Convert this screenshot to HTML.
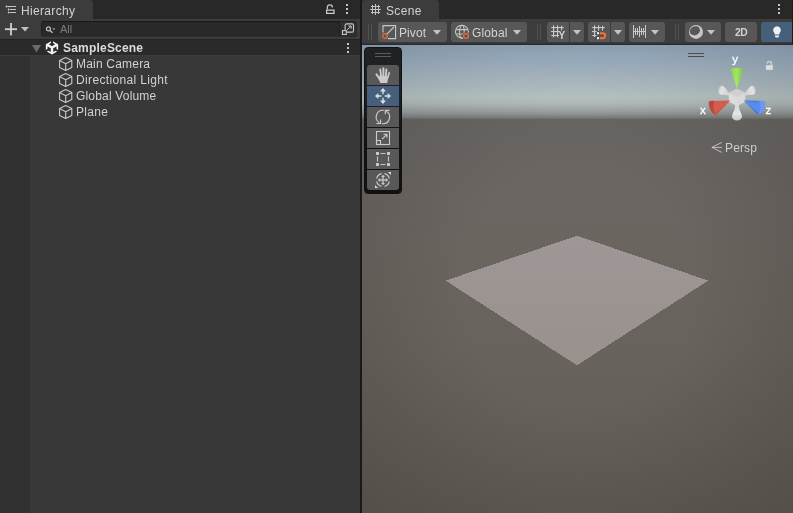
<!DOCTYPE html>
<html>
<head>
<meta charset="utf-8">
<title>Unity Editor</title>
<style>
html,body{margin:0;padding:0;background:#383838;}
body{width:793px;height:513px;overflow:hidden;position:relative;font-family:"Liberation Sans",sans-serif;font-size:12px;color:#d2d2d2;}
.abs{position:absolute;}
.t{position:absolute;white-space:nowrap;line-height:16px;height:16px;will-change:transform;}
svg{position:absolute;overflow:visible;}
.btn{position:absolute;background:#575757;top:22px;height:20px;}
</style>
</head>
<body>
<!-- ================= LEFT: HIERARCHY ================= -->
<div class="abs" id="lp" style="left:0;top:0;width:360px;height:513px;background:#383838;"></div>
<div class="abs" style="left:0;top:0;width:360px;height:19px;background:#282828;"></div>
<div class="abs" style="left:0;top:0;width:93px;height:20px;background:#3c3c3c;border-radius:0 3px 0 0;"></div>
<div class="abs" style="left:0;top:19px;width:360px;height:20px;background:#3c3c3c;"></div>
<div class="abs" style="left:0;top:39px;width:360px;height:1px;background:#232323;"></div>
<!-- tab icon -->
<svg style="left:5px;top:5px" width="12" height="9" viewBox="0 0 12 9">
 <g fill="#c6c6c6"><rect x="2.2" y="1" width="8.8" height="1"/><rect x="4.4" y="4" width="6.6" height="1"/><rect x="4.4" y="7" width="6.6" height="1"/>
 <rect x="0.6" y="1" width="1.8" height="1"/><rect x="1" y="0.5" width="1" height="2"/>
 <rect x="2.8" y="4" width="1.4" height="1"/><rect x="3" y="3.6" width="1" height="1.8"/><rect x="2.8" y="7" width="1.4" height="1"/><rect x="3" y="6.6" width="1" height="1.8"/>
 <rect x="3.2" y="2" width="0.6" height="5" opacity="0.35"/></g>
</svg>
<div class="t" id="t_hier" style="left:20.6px;top:3px;letter-spacing:0.33px;">Hierarchy</div>
<!-- lock + kebab -->
<svg style="left:326px;top:4px" width="9" height="10" viewBox="0 0 9 10">
 <rect x="0.6" y="6.1" width="7.4" height="3.3" fill="none" stroke="#cacaca" stroke-width="1.25"/>
 <path d="M1.3 5.6 V3.5 A2.55 2.55 0 0 1 6.4 3.5" fill="none" stroke="#c6c6c6" stroke-width="1.2"/>
</svg>
<svg style="left:346px;top:4px" width="2" height="10"><g fill="#c4c4c4"><rect x="0" y="0" width="2" height="2"/><rect x="0" y="4" width="2" height="2"/><rect x="0" y="8" width="2" height="2"/></g></svg>
<!-- toolbar: plus, dropdown, search -->
<svg style="left:5px;top:23px" width="26" height="13" viewBox="0 0 26 13">
 <rect x="0" y="5.3" width="12" height="1.8" fill="#d0d0d0"/><rect x="5.1" y="0" width="1.8" height="12.4" fill="#d0d0d0"/>
 <path d="M16 4 L24 4 L20 8.6 Z" fill="#c0c0c0"/>
</svg>
<div class="abs" style="left:41px;top:21px;width:299px;height:16px;box-sizing:border-box;background:#292929;border:1px solid #1f1f1f;border-top-color:#181818;border-bottom-color:#2c2c2c;border-radius:3px 0 0 3px;"></div>
<div class="abs" style="left:340px;top:21px;width:17px;height:16px;box-sizing:border-box;background:#303030;border:1px solid #2a2a2a;border-top-color:#232323;border-left:none;border-radius:0 3px 3px 0;"></div>
<svg style="left:45px;top:24px" width="12" height="10" viewBox="0 0 12 10">
 <circle cx="3.45" cy="4.95" r="2" fill="none" stroke="#c4c4c4" stroke-width="1.2"/>
 <path d="M4.9 6.4 L7.5 8.7" stroke="#c4c4c4" stroke-width="1.3"/>
 <path d="M7.4 4.4 L10.3 4.4 L8.85 6.1 Z" fill="#c4c4c4"/>
</svg>
<div class="t" id="t_all" style="left:60.2px;top:21px;font-size:11px;color:#7b7b7b;">All</div>
<svg style="left:342px;top:23px" width="12" height="12" viewBox="0 0 12 12">
 <rect x="3.1" y="0.9" width="8.4" height="8.2" rx="1.4" fill="none" stroke="#c6c6c6" stroke-width="1.1"/>
 <rect x="0.5" y="7.6" width="3.8" height="3.8" fill="#303030" stroke="#c6c6c6" stroke-width="1.1"/>
 <path d="M5.2 6.8 L9 3.2 M6.4 3 H9.2 V5.8" fill="none" stroke="#c6c6c6" stroke-width="1"/>
</svg>
<!-- scene header row -->
<div class="abs" style="left:0;top:40px;width:360px;height:15px;background:#2a2a2a;"></div>
<div class="abs" style="left:0;top:55px;width:360px;height:1px;background:#3d3d3d;"></div>
<div class="abs" style="left:0;top:56px;width:30px;height:457px;background:#313131;"></div>
<svg style="left:32px;top:45px" width="9" height="8" viewBox="0 0 9 8"><path d="M0 0 H9 L4.5 7.6 Z" fill="#6b6b6b"/></svg>
<!-- unity logo -->
<svg style="left:46px;top:41px" width="12" height="14" viewBox="0 0 12 14">
 <polygon points="6.00,-0.25 12.17,3.17 12.17,10.02 6.00,13.45 -0.17,10.03 -0.17,3.17" fill="#f4f4f4"/>
 <g fill="#2b2b2b"><path d="M5.0 -0.6 H7.0 V2.0 L9.2 3.3 L6 5.2 L2.8 3.3 L5.0 2.0 Z"/><path d="M5.0 -0.6 H7.0 V2.0 L9.2 3.3 L6 5.2 L2.8 3.3 L5.0 2.0 Z" transform="rotate(120 6.00 6.60)"/><path d="M5.0 -0.6 H7.0 V2.0 L9.2 3.3 L6 5.2 L2.8 3.3 L5.0 2.0 Z" transform="rotate(240 6.00 6.60)"/></g>
</svg>
<div class="t" id="t_ss" style="left:63px;top:40px;letter-spacing:0.2px;font-weight:bold;color:#dcdcdc;">SampleScene</div>
<svg style="left:346.7px;top:43px" width="2" height="10"><g fill="#c4c4c4"><rect x="0" y="0" width="2" height="2"/><rect x="0" y="4" width="2" height="2"/><rect x="0" y="8" width="2" height="2"/></g></svg>
<!-- items -->
<svg width="0" height="0" style="position:absolute"><defs>
 <g id="cube"><path d="M6.7 0.6 L12.8 3.6 V10.4 L6.7 13.4 L0.6 10.4 V3.6 Z M0.6 3.6 L6.7 6.7 L12.8 3.6 M6.7 6.7 V13.4" fill="none" stroke="#c8c8c8" stroke-width="1.1" stroke-linejoin="round"/></g>
</defs></svg>
<svg style="left:59px;top:57px" width="14" height="14"><use href="#cube"/></svg>
<svg style="left:59px;top:73px" width="14" height="14"><use href="#cube"/></svg>
<svg style="left:59px;top:89px" width="14" height="14"><use href="#cube"/></svg>
<svg style="left:59px;top:105px" width="14" height="14"><use href="#cube"/></svg>
<div class="t" id="t_i1" style="left:76px;top:56px;letter-spacing:0.2px;">Main Camera</div>
<div class="t" id="t_i2" style="left:76px;top:72px;letter-spacing:0.35px;">Directional Light</div>
<div class="t" id="t_i3" style="left:75.6px;top:88px;letter-spacing:0.18px;">Global Volume</div>
<div class="t" id="t_i4" style="left:76px;top:104px;letter-spacing:0.3px;">Plane</div>

<!-- ================= DIVIDER ================= -->
<div class="abs" style="left:360px;top:0;width:2px;height:513px;background:#191919;"></div>

<!-- ================= RIGHT: SCENE ================= -->
<div class="abs" style="left:362px;top:0;width:431px;height:20px;background:#282828;"></div>
<div class="abs" style="left:362px;top:0;width:77px;height:20px;background:#3c3c3c;border-radius:3px 3px 0 0;"></div>
<div class="abs" style="left:362px;top:19px;width:431px;height:25px;background:#3c3c3c;"></div>
<div class="abs" style="left:362px;top:43px;width:431px;height:1px;background:#343434;"></div><div class="abs" style="left:362px;top:44px;width:431px;height:1px;background:#2b2b2b;"></div>
<div class="t" id="t_scene" style="left:386px;top:3px;letter-spacing:0.35px;">Scene</div>
<svg style="left:370px;top:4px" width="11" height="11" viewBox="0 0 11 11"><g fill="#c2c2c2"><rect x="2" y="1" width="1" height="9"/><rect x="5" y="0" width="1" height="11"/><rect x="8" y="1" width="1" height="9"/><rect x="1" y="2" width="9" height="1"/><rect x="0" y="5" width="11" height="1"/><rect x="1" y="8" width="9" height="1"/></g></svg>
<svg style="left:778px;top:4px" width="2" height="10"><g fill="#c4c4c4"><rect x="0" y="0" width="2" height="2"/><rect x="0" y="4" width="2" height="2"/><rect x="0" y="8" width="2" height="2"/></g></svg>

<!-- scene toolbar -->
<div class="abs" style="left:368px;top:24px;width:1px;height:16px;background:#505050;"></div><div class="abs" style="left:371px;top:24px;width:1px;height:16px;background:#505050;"></div>
<div class="btn" style="left:378px;width:69px;border-radius:3px;"></div>
<svg style="left:382px;top:25px" width="15" height="15" viewBox="0 0 15 15"><path d="M1 7.6 V0.6 H13.6 V13.6 H6" fill="none" stroke="#c8c8c8" stroke-width="1.1"/><path d="M4.6 9.4 L12 2" stroke="#c8c8c8" stroke-width="1.1"/><circle cx="3" cy="11" r="2.3" fill="none" stroke="#f06a3a" stroke-width="1.2"/></svg>
<div class="t" id="t_pivot" style="left:398.7px;top:24.5px;letter-spacing:0.1px;">Pivot</div>
<svg style="left:433px;top:30px" width="8" height="5"><path d="M0 0 H8 L4 4.8 Z" fill="#c4c4c4"/></svg>
<div class="btn" style="left:451px;width:76px;border-radius:3px;"></div>
<svg style="left:455px;top:25px" width="16" height="15" viewBox="0 0 16 15"><g fill="none" stroke="#c8c8c8" stroke-width="1.05"><circle cx="6.9" cy="6.7" r="6.4"/><ellipse cx="6.9" cy="6.7" rx="2.3" ry="6.4"/><path d="M1.3 4.6 H12.5 M1.3 8.9 H12.5"/></g><circle cx="11.05" cy="11" r="3.7" fill="#575757"/><circle cx="11.05" cy="11" r="2.4" fill="none" stroke="#f06a3a" stroke-width="1.3"/></svg>
<div class="t" id="t_global" style="left:471.7px;top:24.5px;letter-spacing:0.15px;">Global</div>
<svg style="left:513px;top:30px" width="8" height="5"><path d="M0 0 H8 L4 4.8 Z" fill="#c4c4c4"/></svg>

<div class="abs" style="left:537px;top:24px;width:1px;height:16px;background:#505050;"></div><div class="abs" style="left:540px;top:24px;width:1px;height:16px;background:#505050;"></div>
<div class="btn" style="left:547px;width:22px;border-radius:3px 0 0 3px;"></div>
<div class="btn" style="left:570px;width:14px;border-radius:0 3px 3px 0;"></div>
<svg style="left:551px;top:25px;will-change:transform" width="15" height="15" viewBox="0 0 15 15"><g fill="#cacaca"><rect x="2" y="0.3" width="1.1" height="12"/><rect x="6" y="0.3" width="1.1" height="12"/><rect x="10" y="0.8" width="1.1" height="4.6"/><rect x="0.3" y="2" width="12.4" height="1.1"/><rect x="0" y="6" width="8.6" height="1.1"/><rect x="0.3" y="10" width="7.6" height="1.1"/></g>
 <text x="7.6" y="13.7" font-family="Liberation Sans, sans-serif" font-weight="bold" font-size="10" fill="#d4d4d4">Y</text></svg>
<svg style="left:573px;top:30px" width="8" height="5"><path d="M0 0 H8 L4 4.8 Z" fill="#c4c4c4"/></svg>

<div class="btn" style="left:588px;width:22px;border-radius:3px 0 0 3px;"></div>
<div class="btn" style="left:611px;width:14px;border-radius:0 3px 3px 0;"></div>
<svg style="left:592px;top:25px" width="15" height="15" viewBox="0 0 15 15"><g fill="#cacaca"><rect x="2" y="0.3" width="1.1" height="11.7"/><rect x="6" y="0.3" width="1.1" height="5.3"/><rect x="10" y="0.8" width="1.1" height="4.8"/><rect x="0.3" y="2" width="12.4" height="1.1"/><rect x="0" y="6" width="4.6" height="1.1"/><rect x="0.3" y="10" width="4.2" height="1.1"/></g>
 <rect x="4.5" y="6.7" width="3.1" height="3" fill="#3c3c3c" opacity="0.6"/><rect x="4.5" y="11.7" width="3.1" height="3" fill="#3c3c3c" opacity="0.6"/>
 <rect x="5" y="7.2" width="2.1" height="2" fill="#fafafa"/><rect x="5" y="12.2" width="2.1" height="2" fill="#fafafa"/>
 <path d="M8 8.2 H10.8 A2.5 2.5 0 0 1 10.8 13.2 H8" fill="none" stroke="#ff6f35" stroke-width="2"/></svg>
<svg style="left:614px;top:30px" width="8" height="5"><path d="M0 0 H8 L4 4.8 Z" fill="#c4c4c4"/></svg>

<div class="btn" style="left:629px;width:36px;border-radius:3px;"></div>
<svg style="left:632px;top:25px" width="15" height="14" viewBox="0 0 15 14"><g fill="#cacaca"><rect x="1" y="0" width="1" height="13"/><rect x="13" y="0" width="1" height="13"/><rect x="1" y="6" width="13" height="1"/><rect x="3" y="3" width="1" height="7"/><rect x="5" y="3" width="1" height="7"/><rect x="7" y="1" width="1" height="11"/><rect x="9" y="3" width="1" height="7"/><rect x="11" y="3" width="1" height="7"/></g></svg>
<svg style="left:651px;top:30px" width="8" height="5"><path d="M0 0 H8 L4 4.8 Z" fill="#c4c4c4"/></svg>

<div class="abs" style="left:675px;top:24px;width:1px;height:16px;background:#505050;"></div><div class="abs" style="left:678px;top:24px;width:1px;height:16px;background:#505050;"></div>
<div class="btn" style="left:685px;width:36px;border-radius:3px;"></div>
<svg style="left:689px;top:25px" width="14" height="14" viewBox="0 0 14 14"><circle cx="7" cy="6.9" r="7" fill="#c6c6c6"/><ellipse cx="5.9" cy="5.7" rx="5.2" ry="4.4" transform="rotate(-25 5.9 5.7)" fill="#575757"/></svg>
<svg style="left:707px;top:30px" width="8" height="5"><path d="M0 0 H8 L4 4.8 Z" fill="#c4c4c4"/></svg>

<div class="btn" style="left:725px;width:32px;border-radius:3px;"></div>
<div class="t" id="t_2d" style="left:734.8px;top:24.5px;font-weight:bold;font-size:10.3px;letter-spacing:-0.5px;">2D</div>
<div class="btn" style="left:761px;width:31px;border-radius:3px 0 0 3px;background:#46607c;"></div>
<svg style="left:772px;top:26px" width="10" height="12" viewBox="0 0 10 12"><path d="M5 0.2 A4.2 4.2 0 0 1 7.4 7.6 V8.6 H2.6 V7.6 A4.2 4.2 0 0 1 5 0.2 Z" fill="#f0f0f0"/><path d="M3 9.6 H7 V10.4 L6 11.6 H4 L3 10.4 Z" fill="#f0f0f0"/></svg>
<div class="abs" style="left:792px;top:0;width:1px;height:513px;background:#1c1c1c;"></div>
<!-- scene view -->
<div class="abs" id="sv" style="left:362px;top:45px;width:431px;height:468px;overflow:hidden;
 background:linear-gradient(to bottom,#98adc3 0px,#a5b8c8 20px,#b4c2c8 40px,#bdc9c8 52px,#b7c1c0 58px,#b0b8b8 61px,#9ca1a1 67px,#888b8b 71px,#7c7d7d 73px,#6b6765 74.5px,#6a6664 80px,#6b6661 150px,#68635c 300px,#615c55 468px);">

 <!-- vignette -->
 <div class="abs" style="left:0;top:0;width:431px;height:468px;background:radial-gradient(ellipse 75% 75% at 50% 52%,rgba(0,0,0,0) 35%,rgba(0,0,0,0.17) 100%);"></div>
 <!-- plane -->
 <svg style="left:0;top:0" width="431" height="468" viewBox="362 45 431 468" shape-rendering="crispEdges">
  <defs><linearGradient id="pg" x1="0" y1="0" x2="0" y2="1"><stop offset="0" stop-color="#9e9795"/><stop offset="1" stop-color="#98918e"/></linearGradient></defs>
  <path d="M577 235.7 L708.3 280.6 L577 365.3 L445.6 280.6 Z" fill="url(#pg)"/>
 </svg>

 <!-- tool palette overlay (coords relative to scene view: page x-362, y-45) -->
 <div class="abs" style="left:2px;top:2px;width:38px;height:147px;box-sizing:border-box;background:linear-gradient(to bottom,#1f2326 0px,#1d2023 50px,#151617 76px,#111111 100px);border:1px solid #111213;border-radius:4px;"></div>
 <div class="abs" style="left:13px;top:8px;width:16px;height:1px;background:#5c5c5c;"></div>
 <div class="abs" style="left:13px;top:11px;width:16px;height:1px;background:#5c5c5c;"></div>
 <div class="abs" style="left:5px;top:20px;width:32px;height:20px;background:#585858;border-radius:3px 3px 0 0;"></div>
 <div class="abs" style="left:5px;top:41px;width:32px;height:20px;background:#46607c;"></div>
 <div class="abs" style="left:5px;top:62px;width:32px;height:20px;background:#585858;"></div>
 <div class="abs" style="left:5px;top:83px;width:32px;height:20px;background:#585858;"></div>
 <div class="abs" style="left:5px;top:104px;width:32px;height:20px;background:#585858;"></div>
 <div class="abs" style="left:5px;top:125px;width:32px;height:20px;background:#585858;border-radius:0 0 3px 3px;"></div>
 <!-- hand -->
 <svg style="left:13px;top:22px" width="16" height="17" viewBox="0 0 16 17">
  <g stroke="#cbcbcb" stroke-linecap="round" fill="none">
   <path d="M5.3 2.5 L6.2 10" stroke-width="1.9"/><path d="M8.4 1.3 L8.4 10" stroke-width="1.9"/><path d="M11.4 2.5 L10.7 10" stroke-width="1.9"/><path d="M14.2 5.7 L12.6 11" stroke-width="1.7"/><path d="M1.5 7.4 L5 12.4" stroke-width="2"/>
  </g>
  <path d="M4.6 8.6 L13.4 9.4 L12.2 16 L5.4 16 L3.4 11.6 Z" fill="#cbcbcb"/>
 </svg>
 <!-- move -->
 <svg style="left:13px;top:43px" width="16" height="16" viewBox="0 0 16 16">
  <g stroke="#d8dfe8" stroke-width="1.4" fill="none"><path d="M8 2 V6.3 M8 9.7 V14 M2 8 H6.3 M9.7 8 H14"/></g>
  <g fill="#d8dfe8"><path d="M8 0 L11 3.4 H5 Z"/><path d="M8 16 L11 12.6 H5 Z"/><path d="M0 8 L3.4 5 V11 Z"/><path d="M16 8 L12.6 5 V11 Z"/></g>
 </svg>
 <!-- rotate -->
 <svg style="left:13px;top:64px" width="16" height="16" viewBox="0 0 16 16">
  <g stroke="#cbcbcb" stroke-width="1.15" fill="none">
   <path d="M8.8 1.35 A6.7 6.7 0 0 0 4.4 13.7"/>
   <path d="M7 14.65 A6.7 6.7 0 0 0 11.4 2.3"/>
   <path d="M1.3 14.5 H5.6 V10.6"/><path d="M14.6 1.4 H10.3 V5.3"/>
  </g>
 </svg>
 <!-- scale -->
 <svg style="left:13px;top:85px" width="16" height="16" viewBox="0 0 16 16">
  <g stroke="#cbcbcb" stroke-width="1.1" fill="none">
   <rect x="1.5" y="1.5" width="13" height="13"/>
   <rect x="1.5" y="10.5" width="4" height="4"/>
   <path d="M7.2 9 L11.8 4.4 M8.4 4.3 H11.9 V7.8"/>
  </g>
 </svg>
 <!-- rect -->
 <svg style="left:13px;top:106px" width="16" height="16" viewBox="0 0 16 16">
  <g fill="#c8c8c8"><rect x="1" y="1" width="3" height="3"/><rect x="12" y="1" width="3" height="3"/><rect x="1" y="12" width="3" height="3"/><rect x="12" y="12" width="3" height="3"/></g>
  <g stroke="#c8c8c8" stroke-width="1.1"><path d="M5.5 2.5 H10.5 M5.5 13.5 H10.5 M2.5 5.5 V10.5 M13.5 5.5 V10.5"/></g>
 </svg>
 <!-- transform -->
 <svg style="left:13px;top:127px" width="16" height="16" viewBox="0 0 16 16">
  <g stroke="#cbcbcb" stroke-width="1.15" fill="none"><path d="M14.36 9.30 A6.5 6.5 0 0 1 9.35 14.31"/><path d="M6.65 14.31 A6.5 6.5 0 0 1 1.64 9.30"/><path d="M1.64 6.60 A6.5 6.5 0 0 1 6.65 1.59"/><path d="M9.35 1.59 A6.5 6.5 0 0 1 14.36 6.60"/></g>
  <g stroke="#bdbdbd" stroke-width="1.5" fill="none"><path d="M8 4.4 V11.5 M4.4 7.95 H11.6"/></g>
  <g fill="#c4c4c4"><path d="M8 2.7 L10 5 H6 Z"/><path d="M8 13.2 L10 10.9 H6 Z"/><path d="M2.8 7.95 L5.1 5.95 V9.95 Z"/><path d="M13.2 7.95 L10.9 5.95 V9.95 Z"/>
   <path d="M12.9 0 H16 V3.1 Z" fill="#dcdcdc"/><path d="M3.1 16 H0 V12.9 Z" fill="#dcdcdc"/></g>
 </svg>

 <!-- gizmo overlay handle -->
 <div class="abs" style="left:326px;top:8px;width:16px;height:1px;background:#4c4c4c;"></div>
 <div class="abs" style="left:326px;top:11px;width:16px;height:1px;background:#4c4c4c;"></div>
 <!-- orientation gizmo -->
 <svg style="left:328px;top:3px;will-change:transform" width="100" height="80" viewBox="690 48 100 80">
  <defs>
   <linearGradient id="gg" x1="0" y1="0" x2="1" y2="0"><stop offset="0" stop-color="#86cf46"/><stop offset="0.45" stop-color="#a4e666"/><stop offset="1" stop-color="#78c43a"/></linearGradient>
   <linearGradient id="gr" x1="0" y1="0.3" x2="0.8" y2="1"><stop offset="0" stop-color="#b4453b"/><stop offset="0.3" stop-color="#d85e50"/><stop offset="0.7" stop-color="#d65a4c"/><stop offset="1" stop-color="#c24c40"/></linearGradient>
   <linearGradient id="gb" x1="1" y1="0.3" x2="0.2" y2="1"><stop offset="0" stop-color="#3e6ed6"/><stop offset="0.3" stop-color="#5d8df0"/><stop offset="0.7" stop-color="#6f9cf4"/><stop offset="1" stop-color="#4c7ce2"/></linearGradient>
   <linearGradient id="gwl" x1="0" y1="0" x2="1" y2="0.3"><stop offset="0" stop-color="#b8b8b8"/><stop offset="0.35" stop-color="#e4e4e4"/><stop offset="1" stop-color="#d0d0d0"/></linearGradient>
   <linearGradient id="gwr" x1="1" y1="0" x2="0" y2="0.3"><stop offset="0" stop-color="#b8b8b8"/><stop offset="0.35" stop-color="#e4e4e4"/><stop offset="1" stop-color="#d0d0d0"/></linearGradient>
   <linearGradient id="gwb" x1="0" y1="1" x2="0" y2="0"><stop offset="0" stop-color="#c4c4c4"/><stop offset="0.4" stop-color="#e6e6e6"/><stop offset="1" stop-color="#d2d2d2"/></linearGradient>
  </defs>
  <!-- back grey cones -->
  <path d="M730.4 93.6 C727 91.6 725.4 87.2 722.6 85.8 C718.2 85 716.6 92.4 720.2 94.6 C723.6 95.6 727 94.4 730 96.6 Z" fill="url(#gwl)"/>
  <path d="M743.6 93.6 C747 91.6 748.6 87.2 751.4 85.8 C755.8 85 757.4 92.4 753.8 94.6 C750.4 95.6 747 94.4 744 96.6 Z" fill="url(#gwr)"/>
  <!-- bottom cone -->
  <path d="M735 104.4 C735.6 109.6 732.4 112.4 732 116.4 C732.2 121.8 741.8 121.8 742 116.4 C741.6 112.4 738.4 109.6 739 104.4 Z" fill="url(#gwb)"/>
  <!-- center cube -->
  <path d="M737 88.8 L745.2 92.9 V101.8 L737 106 L728.8 101.8 V92.9 Z" fill="#dcdcdc"/>
  <path d="M737 88.8 L745.2 92.9 L737 97 L728.8 92.9 Z" fill="#cfcfcf"/>
  <path d="M737 97 L745.2 92.9 V101.8 L737 106 Z" fill="#d8d8d8"/>
  <!-- green cone -->
  <path d="M730.3 68.8 C732.6 67.6 741.4 67.6 743.7 68.8 L737.4 88 H736.6 Z" fill="url(#gg)"/>
  <!-- red cone -->
  <path d="M730.2 100.4 L709.4 100.9 C707.4 104.6 711 113.4 715.9 114.9 Z" fill="#d65c4e"/>
  <path d="M714.6 100.8 L709.4 100.9 C707.4 104.6 711 113.4 715.9 114.9 C713.2 111 712.6 104.6 714.6 100.8 Z" fill="#b9483d"/>
  <path d="M730.2 100.4 L715.9 114.9 L714.9 113.4 Z" fill="#c65245" opacity="0.7"/>
  <!-- blue cone -->
  <path d="M743.8 100.4 L764.6 100.9 C766.6 104.6 763 113.4 758.1 114.9 Z" fill="#5a8af0"/>
  <path d="M759.4 100.8 L764.6 100.9 C766.6 104.6 763 113.4 758.1 114.9 C760.8 111 761.4 104.6 759.4 100.8 Z" fill="#6c99f4"/>
  <path d="M743.8 100.4 L758.1 114.9 L759.1 113.4 Z" fill="#3f6fd6" opacity="0.7"/>
  <path d="M743.8 100.4 L759.4 100.8 L757 103 Z" fill="#426fd0" opacity="0.5"/>
  <g font-family="Liberation Sans, sans-serif" fill="#ffffff" stroke="#ffffff" stroke-width="0.3">
   <text x="732.2" y="63" font-size="11.5">y</text><text x="700" y="113.6" font-size="11.5">x</text><text x="765.6" y="113.6" font-size="11.5">z</text>
  </g>
  <!-- lock -->
  <g opacity="0.8"><rect x="765.9" y="65.2" width="6.9" height="4.7" fill="#eeeeee"/><path d="M771.4 65.4 V63.8 A2.1 2.1 0 0 0 767.2 63.6" fill="none" stroke="#eeeeee" stroke-width="1.5" opacity="0.75"/></g>
 </svg>
 <!-- persp -->
 <svg style="left:349px;top:97px" width="12" height="11" viewBox="0 0 12 11"><path d="M10.8 0.4 L0.9 5.4 L10.8 10.4 M0.9 5.4 H10.8" fill="none" stroke="#c9c9c9" stroke-width="0.9"/></svg>
 <div class="t" id="t_persp" style="left:362.6px;top:95px;color:#cdcdcd;letter-spacing:0.15px;">Persp</div>
</div>
</body>
</html>
